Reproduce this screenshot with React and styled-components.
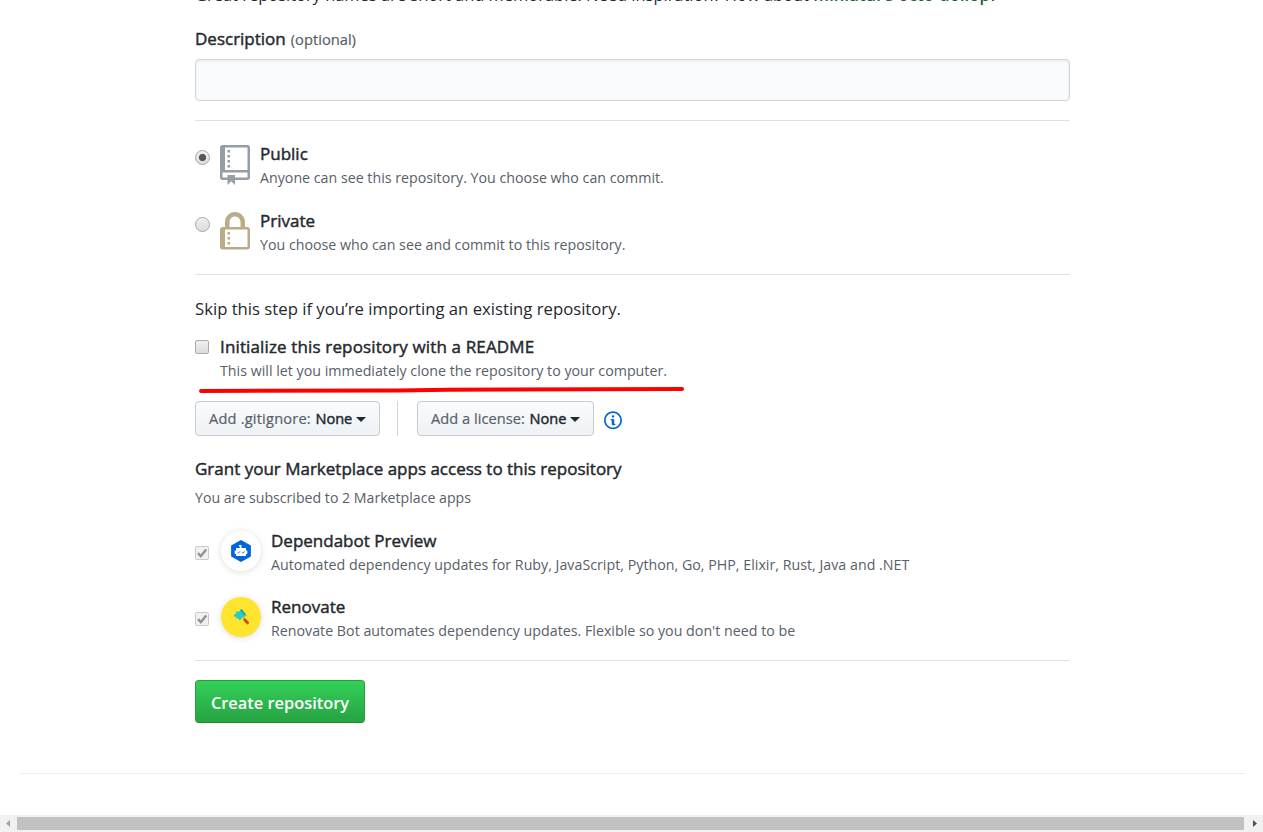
import React from 'react';
import styled, { createGlobalStyle, css } from 'styled-components';

const GlobalStyle = createGlobalStyle`
  *, *::before, *::after { box-sizing: border-box; }
  html, body { margin: 0; padding: 0; background: #fff; }
  body {
    overflow: hidden;
    color: #24292e;
    font-family: "Open Sans", "Noto Sans", sans-serif;
    font-size: 16.4px;
  }
`;

const Page = styled.div`
  display: flex;
  flex-direction: column;
  height: 832px;
  overflow: hidden;
`;

const Form = styled.main`
  width: 875px;
  margin-left: 195px;
  height: 773px;
  flex: none;
`;

const Line = styled.div`
  display: block;
  height: 24px;
  line-height: 24px;
  white-space: nowrap;
  letter-spacing: ${(p) => p.$track || 0}px;
`;

/* Medium weight, between the regular and semibold faces. */
const medium = css`
  font-weight: 400;
  -webkit-text-stroke: 0.45px currentColor;
`;

const Title = styled(Line)`
  ${medium}
  font-size: 17px;
`;

const Body = styled(Line)`
  font-size: 16.7px;
  margin-bottom: 14px;
`;

const Note = styled(Line)`
  font-size: 14.22px;
  color: #586069;
`;

const Subscription = styled(Note)`
  margin-top: 5px;
  font-size: 14.15px;
`;

const Hint = styled(Line)`
  font-size: 16.47px;
  margin-top: -17px;
  margin-bottom: 20px;
  strong { color: #22632c; font-weight: 600; letter-spacing: 0.15px; }
`;

const Optional = styled.span`
  font-size: 14.7px;
  color: #586069;
  margin-left: 5px;
  -webkit-text-stroke: 0.2px currentColor;
`;

const TextInput = styled.input`
  display: block;
  width: 100%;
  height: 42px;
  margin-top: 8px;
  padding: 0 10px;
  background: #fafbfc;
  border: 1px solid #d1d5da;
  border-radius: 4px;
  box-shadow: inset 0 1px 3px rgba(27, 31, 35, 0.09);
  outline: none;
`;

const Divider = styled.hr`
  border: 0;
  height: 1px;
  background: #dfe2e5;
  margin: ${(p) => p.$top}px 0 ${(p) => p.$bottom}px;
`;

const Option = styled.label`
  display: flex;
  align-items: flex-start;
  height: ${(p) => p.$height || 48}px;
`;

const OptionText = styled.div`
  margin-left: ${(p) => p.$gap}px;
`;

const AppList = styled.div`
  margin-top: 19px;
`;

const control = css`
  appearance: none;
  flex: none;
  margin: ${(p) => p.$top}px 0 0;
  border: 1px solid #a8a8a8;
  background: linear-gradient(#efefef, #dcdcdc);
`;

const Radio = styled.input.attrs({ type: 'radio' })`
  ${control}
  width: 15px;
  height: 15px;
  border-radius: 50%;
  margin-right: 10px;
  &:checked {
    background: radial-gradient(circle, #555 0 3.2px, transparent 4px),
      linear-gradient(#efefef, #dcdcdc);
  }
`;

const CheckFrame = styled.span`
  ${control}
  display: block;
  width: 14px;
  height: 14px;
  border-radius: 2px;
  border-color: ${(p) => (p.$disabled ? '#c9c9c9' : '#acacac')};
  ${(p) => p.$disabled && 'background: #f1f1f1;'}
  svg { display: block; }
`;

const Icon = styled.svg`
  display: block;
  flex: none;
  fill: ${(p) => p.$color};
  margin-top: 3px;
`;

const Underline = styled.svg`
  display: block;
  margin: 3px 0 7px 3px;
`;

const Toolbar = styled.div`
  display: flex;
  align-items: center;
  height: 35px;
  margin-bottom: 21px;
`;

const MenuButton = styled.button`
  display: flex;
  align-items: center;
  width: ${(p) => p.$width}px;
  height: 35px;
  padding: 0 0 1px 13px;
  border: 1px solid #c8cbcf;
  border-radius: 4px;
  background: linear-gradient(#fafbfc, #eff3f6 90%);
  font: 400 14.6px "Open Sans", "Noto Sans", sans-serif;
  letter-spacing: ${(p) => p.$track}px;
  white-space: nowrap;
  color: #586069;
  -webkit-text-stroke: 0.2px currentColor;
  b {
    ${medium}
    width: 38px;
    margin-left: 4px;
    color: #24292e;
    letter-spacing: 0;
  }
  &::after {
    content: "";
    margin-left: 3px;
    margin-top: 2px;
    border: 5px solid transparent;
    border-top-color: #24292e;
    border-bottom: 0;
  }
`;

const Separator = styled.span`
  width: 1px;
  height: 35px;
  margin: 0 19px 0 17px;
  background: #d1d5da;
`;

const InfoIcon = styled.svg`
  margin-left: 10px;
  margin-top: 3px;
  fill: #0366d6;
`;

const Avatar = styled.span`
  display: flex;
  flex: none;
  align-items: center;
  justify-content: center;
  width: 40px;
  height: 40px;
  margin: 2px 0 0 12px;
  border-radius: 50%;
  background: ${(p) => p.$color};
  box-shadow: 0 1px 6px rgba(27, 31, 35, 0.15);
`;

const SubmitButton = styled.button`
  display: block;
  width: 170px;
  height: 43px;
  padding: 1px 0 0;
  border: 1px solid #2a9c43;
  border-bottom-color: #23893a;
  border-radius: 4px;
  background: linear-gradient(#34d058, #28a745 90%);
  color: #fff;
  font: 600 16.4px "Open Sans", "Noto Sans", sans-serif;
`;

const FooterRule = styled.div`
  flex: none;
  height: 1px;
  margin: 0 18px 41px 20px;
  background: #eaecef;
`;

const Scrollbar = styled.div`
  display: flex;
  align-items: center;
  flex: none;
  height: 17px;
  background: #f1f1f1;
`;

const ScrollArrow = styled.svg`
  width: ${(p) => p.$width}px;
  height: 17px;
  fill: ${(p) => p.$color};
`;

const ScrollThumb = styled.div`
  width: 1227px;
  height: 13px;
  background: #c1c1c1;
`;

function DisabledCheck() {
  return (
    <CheckFrame $top={17} $disabled>
      <svg width="12" height="12" viewBox="0 0 12 12">
        <path d="M2 6.2 4.8 9.2 10.2 2.5" fill="none" stroke="#929292" strokeWidth="2.5" />
      </svg>
    </CheckFrame>
  );
}

function DependabotLogo() {
  return (
    <svg width="22" height="22" viewBox="0 0 22 22">
      <path d="M11 0 20.9 5.5v11L11 22 1.100 16.500v-11z" fill="#0366d6" />
      <path d="M9 5h2.500v3H16v2.500h1.300v3.500H16v2H6v-2H4.700v-3.500H6V8h3.800V6.500H9z" fill="#fff" />
      <path d="m7.600 12.300.9.9 1.500-2M12.200 12.300l.9.9 1.500-2" fill="none" stroke="#0366d6" strokeWidth=".8" />
    </svg>
  );
}

function RenovateLogo() {
  return (
    <svg width="18" height="18" viewBox="0 0 18 18">
      <path d="m2 6.500 2.500-1L4 3l2.500 1L9.500 1l4.500 5.500-6.500 6-1.500-2.500-2 1 .5-2.500-2.500.5z" fill="#2cc9bd" />
      <path d="m9.500 1 4.500 5.500-1.200 1.100-4.600-5.400z" fill="#1ba5b0" />
      <path d="M13.800 6.500c.8 1.500-1.500 2-2 3l.8 1.200" fill="none" stroke="#9c9a4a" strokeWidth="1" />
      <path d="m12.700 11.800 2.800 3" stroke="#c9501c" strokeWidth="3" strokeLinecap="round" />
    </svg>
  );
}

const REPO =
  'M4 9H3V8h1v1zm0-3H3v1h1V6zm0-2H3v1h1V4zm0-2H3v1h1V2zm8-1v12c0 .55-.45 1-1 1H6v2l-1.5-1.5L3 16v-2H1c-.55 0-1-.45-1-1V1c0-.55.45-1 1-1h10c.55 0 1 .45 1 1zm-1 10H1v2h2v-1h3v1h5v-2zm0-10H2v9h9V1z';
const LOCK =
  'M4 13H3v-1h1v1zm8-6v7c0 .55-.45 1-1 1H1c-.55 0-1-.45-1-1V7c0-.55.45-1 1-1h1V4c0-2.2 1.8-4 4-4s4 1.8 4 4v2h1c.55 0 1 .45 1 1zM3.8 6h4.41V4c0-1.22-.98-2.2-2.2-2.2-1.22 0-2.2.98-2.2 2.2v2H3.8zM11 7H2v7h9V7zM4 8H3v1h1V8zm0 2H3v1h1v-1z';
const INFO =
  'M6.3 5.69a.942.942 0 0 1-.28-.7c0-.28.09-.52.28-.7.19-.18.42-.28.7-.28.28 0 .52.09.7.28.18.19.28.42.28.7 0 .28-.09.52-.28.7a1 1 0 0 1-.7.3c-.28 0-.52-.11-.7-.3zM8 7.99c-.02-.25-.11-.48-.31-.69-.2-.19-.42-.3-.69-.31H6c-.27.02-.48.13-.69.31-.2.2-.3.44-.31.69h1v3c.02.27.11.5.31.69.2.2.42.31.69.31h1c.27 0 .48-.11.69-.31.2-.19.3-.42.31-.69H8V7.98v.01zM7 2.3c-3.14 0-5.7 2.54-5.7 5.68 0 3.14 2.56 5.7 5.7 5.7s5.7-2.55 5.7-5.7c0-3.15-2.56-5.69-5.7-5.69v.01zM7 .98c3.86 0 7 3.14 7 7s-3.14 7-7 7-7-3.12-7-7 3.14-7 7-7z';

export default function App() {
  return (
    <>
      <GlobalStyle />
      <Page>
        <Form>
          <Hint>
            Great repository names are short and memorable. Need inspiration? How about{' '}
            <strong>miniature-octo-dollop</strong>?
          </Hint>
          <Title as="label">
            Description<Optional>(optional)</Optional>
          </Title>
          <TextInput aria-label="Description" />
          <Divider $top={19} $bottom={21} />

          <Option $height={67}>
            <Radio name="visibility" defaultChecked $top={8} />
            <Icon $color="#959da5" width="30" height="40" viewBox="0 0 12 16"><path d={REPO} /></Icon>
            <OptionText $gap={10}>
              <Title>Public</Title>
              <Note>Anyone can see this repository. You choose who can commit.</Note>
            </OptionText>
          </Option>
          <Option>
            <Radio name="visibility" $top={8} />
            <Icon $color="#b9ac86" width="30" height="40" viewBox="0 0 12 16"><path d={LOCK} /></Icon>
            <OptionText $gap={10}>
              <Title>Private</Title>
              <Note>You choose who can see and commit to this repository.</Note>
            </OptionText>
          </Option>
          <Divider $top={17} $bottom={22} />

          <Body>Skip this step if you’re importing an existing repository.</Body>
          <Option>
            <CheckFrame $top={5} />
            <OptionText $gap={11}>
              <Title $track={0.14}>Initialize this repository with a README</Title>
              <Note $track={0.01}>This will let you immediately clone the repository to your computer.</Note>
            </OptionText>
          </Option>
          <Underline width="488" height="8" viewBox="0 0 488 8">
            <path d="M3 5 200 4.500 250 3.800 484 3" fill="none" stroke="#fe0000" strokeWidth="4" strokeLinecap="round" />
          </Underline>

          <Toolbar>
            <MenuButton $width={185} $track={0.2}>Add .gitignore: <b>None</b></MenuButton>
            <Separator />
            <MenuButton $width={177} $track={0.05}>Add a license: <b>None</b></MenuButton>
            <InfoIcon width="18" height="20.5" viewBox="0 0 14 16"><path d={INFO} /></InfoIcon>
          </Toolbar>

          <Title>Grant your Marketplace apps access to this repository</Title>
          <Subscription>You are subscribed to 2 Marketplace apps</Subscription>

          <AppList>
            <Option $height={66}>
              <DisabledCheck />
              <Avatar $color="#fff"><DependabotLogo /></Avatar>
              <OptionText $gap={10}>
                <Title>Dependabot Preview</Title>
                <Note $track={0.015}>Automated dependency updates for Ruby, JavaScript, Python, Go, PHP, Elixir, Rust, Java and .NET</Note>
              </OptionText>
            </Option>
            <Option>
              <DisabledCheck />
              <Avatar $color="#ffe42e"><RenovateLogo /></Avatar>
              <OptionText $gap={10}>
                <Title>Renovate</Title>
                <Note $track={0.01}>Renovate Bot automates dependency updates. Flexible so you don't need to be</Note>
              </OptionText>
            </Option>
          </AppList>
          <Divider $top={17} $bottom={19} />
          <SubmitButton>Create repository</SubmitButton>
        </Form>
        <FooterRule />
        <Scrollbar>
          <ScrollArrow $width={17} $color="#a3a3a3" viewBox="0 0 17 17"><path d="M10 5v7L6 8.500z" /></ScrollArrow>
          <ScrollThumb />
          <ScrollArrow $width={19} $color="#505050" viewBox="0 0 19 17"><path d="M9 5v7l4-3.500z" /></ScrollArrow>
        </Scrollbar>
      </Page>
    </>
  );
}
